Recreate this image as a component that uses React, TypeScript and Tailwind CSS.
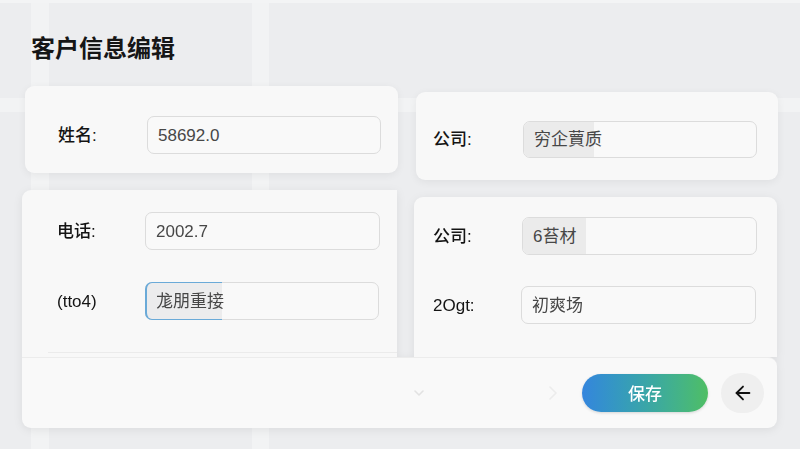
import React from "react";
import { ArrowLeft } from "lucide-react";

const FONT = "font-['Liberation_Sans','Noto_Sans_CJK_SC',sans-serif]";

function Field({
  label,
  value,
  labelW,
  inputW,
  inputH,
  highlight,
  focus,
}: {
  label: string;
  value: string;
  labelW: number;
  inputW: number;
  inputH: number;
  highlight?: number;
  focus?: boolean;
}) {
  return (
    <div className="flex items-center">
      <div style={{ width: labelW }} className="text-[17px] font-medium text-[#141414] leading-none">
        {label}
      </div>
      <div
        style={{ width: inputW, height: inputH }}
        className="relative flex items-center rounded-[7px] border border-[#dcdcdc] bg-[#f9f9f9] text-[17px] text-[#474747]"
      >
        {highlight ? (
          <div
            style={{ width: highlight }}
            className={
              focus
                ? "absolute -left-px -top-px -bottom-px rounded-l-[7px] border-l-2 border-y border-[#6aaad8] bg-[#ececed]"
                : "absolute left-0 top-0 bottom-0 rounded-l-[6px] bg-[#ebebeb]"
            }
          />
        ) : null}
        <span className="relative pl-[10px] leading-none">{value}</span>
      </div>
    </div>
  );
}

export default function App() {
  return (
    <div className={`relative w-[800px] h-[449px] overflow-hidden bg-[#ecedef] ${FONT}`}>
      {/* faint background grid bands */}
      <div className="absolute left-[31px] top-0 w-[18px] h-full bg-[#f2f3f4]" />
      <div className="absolute left-[252px] top-0 w-[17px] h-full bg-[#f2f3f4]" />
      <div className="absolute left-0 top-[98px] w-full h-[14px] bg-[#f2f3f4]" />
      <div className="absolute left-0 top-0 w-full h-[3px] bg-[#f3f4f5]" />

      <div className="relative pl-[22px] pt-[31px]">
        <h1 className="pl-[9px] text-[24px] leading-[32px] font-semibold text-[#161616] font-['Noto_Sans_CJK_SC',sans-serif]">
          客户信息编辑
        </h1>

        <div className="mt-[23px] flex items-start">
          <div className="ml-[3px] w-[373px] h-[87px] rounded-[9px] bg-[#f8f8f8] shadow-[0_2px_8px_rgba(0,0,0,0.06)] pl-[33px] pt-[30px]">
            <Field label="姓名:" value="58692.0" labelW={89} inputW={234} inputH={38} />
          </div>
          <div className="ml-[18px] mt-[6px] w-[362px] h-[88px] rounded-[9px] bg-[#f8f8f8] shadow-[0_2px_8px_rgba(0,0,0,0.06)] pl-[17px] pt-[29px]">
            <Field label="公司:" value="穷企蕒质" labelW={90} inputW={234} inputH={37} highlight={70} />
          </div>
        </div>

        <div className="mt-[10px] w-[756px] drop-shadow-[0_2px_4px_rgba(0,0,0,0.07)]">
          <div className="flex items-start">
            <div className="w-[375px] h-[167px] rounded-tl-[9px] bg-[#f8f8f8] flex flex-col">
              <div className="pl-[35px] pt-[22px] flex flex-col gap-[32px]">
                <Field label="电话:" value="2002.7" labelW={88} inputW={235} inputH={38} />
                <Field label="(tto4)" value="尨朋重接" labelW={88} inputW={234} inputH={38} highlight={77} focus />
              </div>
              <div className="mt-auto mb-[4px] ml-[26px] h-px bg-[#ebebeb]" />
            </div>
            <div className="ml-[17px] mt-[7px] w-[363px] h-[160px] rounded-t-[9px] bg-[#f8f8f8] pl-[19px] pt-[20px] flex flex-col gap-[31px]">
              <Field label="公司:" value="6苔材" labelW={89} inputW={235} inputH={38} highlight={63} />
              <Field label="2Ogt:" value="初爽场" labelW={88} inputW={235} inputH={38} />
            </div>
          </div>
          <div className="w-[755px] h-[71px] rounded-b-[9px] rounded-tr-[9px] bg-[#f9f9f9] border-t border-[#ececec] flex items-center">
            <svg className="ml-[391px]" width="12" height="8" viewBox="0 0 12 8" fill="none">
              <path d="M2 2l4 4 4-4" stroke="#e2e2e2" strokeWidth="1.6" strokeLinecap="round" strokeLinejoin="round" />
            </svg>
            <svg className="ml-[123px]" width="10" height="16" viewBox="0 0 10 16" fill="none">
              <path d="M2 2l6 6-6 6" stroke="#ececec" strokeWidth="1.6" strokeLinecap="round" strokeLinejoin="round" />
            </svg>
            <button className="ml-[24px] w-[126px] h-[38px] rounded-full bg-linear-to-r from-[#3585dd] to-[#4fbe63] text-white text-[17px] font-medium flex items-center justify-center font-['Noto_Sans_CJK_SC',sans-serif] shadow-[0_1px_3px_rgba(0,0,0,0.15)]">
              保存
            </button>
            <button className="ml-[13px] w-[43px] h-[40px] rounded-full bg-[#efefef] flex items-center justify-center text-[#111]">
              <ArrowLeft size={22} strokeWidth={2} />
            </button>
          </div>
        </div>
      </div>
    </div>
  );
}
